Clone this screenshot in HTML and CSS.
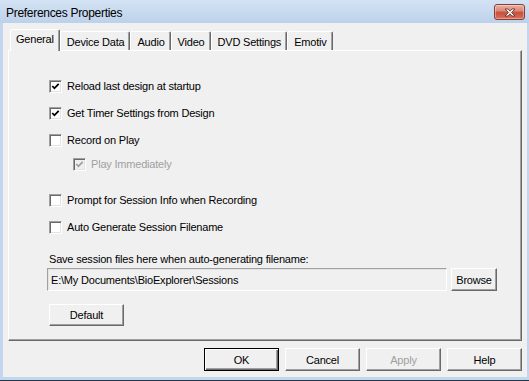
FILE: index.html
```html
<!DOCTYPE html>
<html lang="en">
<head>
    <meta charset="UTF-8">
    <meta name="viewport" content="width=device-width, initial-scale=1.0">
    <title>Preferences Properties</title>
    <link rel="stylesheet" href="styles.css">
</head>
<body>

    <div class="window">
        <div class="titlebar">
            <span class="title">Preferences Properties</span>
            <button class="close" title="Close">
                <svg width="12" height="9" viewBox="0 0 12 9">
                    <path d="M1 1h3l2 2.2 2-2.2h3l-3.5 3.5 3.5 3.5h-3l-2-2.2-2 2.2h-3l3.5-3.5z" fill="#fff" stroke="#5b2a22" stroke-width="0.8"/>
                </svg>
            </button>
        </div>

        <div class="client">
            <div class="tabs">
                <div class="tab active">General</div>
                <div class="tab">Device Data</div>
                <div class="tab">Audio</div>
                <div class="tab">Video</div>
                <div class="tab">DVD Settings</div>
                <div class="tab">Emotiv</div>
            </div>

            <div class="panel">
                <label class="check first">
                    <span class="box"><svg width="9" height="9" viewBox="0 0 9 9"><polyline points="1.3,4 3.4,6.3 7.7,1.8" /></svg></span>
                    Reload last design at startup
                </label>
                <label class="check">
                    <span class="box"><svg width="9" height="9" viewBox="0 0 9 9"><polyline points="1.3,4 3.4,6.3 7.7,1.8" /></svg></span>
                    Get Timer Settings from Design
                </label>
                <label class="check">
                    <span class="box"></span>
                    Record on Play
                </label>
                <label class="check sub disabled">
                    <span class="box"><svg width="9" height="9" viewBox="0 0 9 9"><polyline points="1.3,4 3.4,6.3 7.7,1.8" /></svg></span>
                    Play Immediately
                </label>

                <label class="check group">
                    <span class="box"></span>
                    Prompt for Session Info when Recording
                </label>
                <label class="check">
                    <span class="box"></span>
                    Auto Generate Session Filename
                </label>

                <div class="save-label">Save session files here when auto-generating filename:</div>
                <div class="path-row">
                    <input class="path" type="text" value="E:\My Documents\BioExplorer\Sessions" readonly>
                    <button class="btn browse">Browse</button>
                </div>

                <button class="btn default-btn">Default</button>
            </div>

            <div class="actions">
                <button class="btn ok">OK</button>
                <button class="btn">Cancel</button>
                <button class="btn" disabled>Apply</button>
                <button class="btn">Help</button>
            </div>
        </div>
    </div>

</body>
</html>
```

FILE: styles.css
```css
body {
    margin: 0;
    padding: 0;
    font-family: "Liberation Sans", Arial, sans-serif;
    font-size: 11px;
    letter-spacing: -0.2px;
    color: #000;
}

.window {
    width: 529px;
    height: 381px;
    box-sizing: border-box;
    display: flex;
    flex-direction: column;
    background-color: #c2d6ed;
    padding-bottom: 3px;
    border-bottom: 1px solid #26364a;
}

.titlebar {
    height: 23px;
    flex-shrink: 0;
    display: flex;
    align-items: center;
    justify-content: space-between;
    padding: 0 4px 0 6px;
    background: linear-gradient(#d4e3f4, #bcd1ea);
}

.title {
    font-size: 12px;
    letter-spacing: -0.3px;
    padding-top: 2px;
}

.close {
    width: 31px;
    height: 16px;
    margin-top: 1px;
    padding: 0;
    display: flex;
    align-items: center;
    justify-content: center;
    border: 1px solid #8b3b30;
    border-radius: 3px;
    background: linear-gradient(#eab0a3, #da8b79 40%, #c84f3b 55%, #d6735f);
    box-shadow: inset 0 0 0 1px rgba(255, 255, 255, 0.35);
}

.client {
    flex: 1;
    display: flex;
    flex-direction: column;
    margin: 0 2px 0 3px;
    padding: 6px 5px;
    background-color: #f0f0f0;
}

.tabs {
    height: 21px;
    flex-shrink: 0;
    display: flex;
    align-items: flex-end;
    padding-left: 2px;
}

.tab {
    height: 19px;
    box-sizing: border-box;
    padding: 2px 5px 0 6px;
    line-height: 16px;
    background-color: #f0f0f0;
    border-top: 1px solid #fff;
    border-left: 1px solid #fff;
    border-right: 1px solid #696969;
    border-radius: 2px 2px 0 0;
    box-shadow: inset -1px 0 #a0a0a0;
}

.tab.active {
    position: relative;
    z-index: 1;
    height: 22px;
    margin-bottom: -1px;
    padding: 1px 5px 0 5px;
}

.panel {
    flex: 1;
    display: flex;
    flex-direction: column;
    align-items: flex-start;
    padding: 27px 0 0 40px;
    border: 1px solid;
    border-color: #fff #696969 #696969 #fff;
    box-shadow: inset -1px -1px #a0a0a0;
}

.check {
    height: 16px;
    display: flex;
    align-items: center;
    gap: 5px;
    margin-top: 11px;
}

.check.first {
    margin-top: 0;
}

.check.sub {
    margin-top: 8px;
    margin-left: 24px;
}

.check.group {
    margin-top: 20px;
}

.box {
    width: 13px;
    height: 13px;
    box-sizing: border-box;
    display: flex;
    align-items: center;
    justify-content: center;
    background-color: #fff;
    border: 1px solid;
    border-color: #a0a0a0 #fff #fff #a0a0a0;
    box-shadow: inset 1px 1px #696969, inset -1px -1px #e3e3e3;
}

.box polyline {
    fill: none;
    stroke: #000;
    stroke-width: 1.8;
}

.check.disabled {
    color: #a0a0a0;
}

.check.disabled .box {
    background-color: #f0f0f0;
}

.check.disabled .box polyline {
    stroke: #a0a0a0;
}

.save-label {
    height: 14px;
    line-height: 14px;
    margin-top: 17px;
}

.path-row {
    display: flex;
    gap: 4px;
    margin-top: 2px;
    margin-left: -2px;
}

.path {
    width: 400px;
    height: 23px;
    box-sizing: border-box;
    margin: 0;
    padding: 0 3px;
    font: inherit;
    letter-spacing: inherit;
    color: #000;
    background-color: #f0f0f0;
    border: 1px solid;
    border-color: #a0a0a0 #fff #fff #a0a0a0;
    box-shadow: inset 1px 1px #e3e3e3;
    outline: none;
}

.btn {
    width: 75px;
    height: 23px;
    box-sizing: border-box;
    padding: 0;
    font: inherit;
    letter-spacing: inherit;
    color: #000;
    background-color: #f0f0f0;
    border: 1px solid;
    border-color: #fff #696969 #696969 #fff;
    box-shadow: inset -1px -1px #a0a0a0;
}

.btn:disabled {
    color: #a0a0a0;
}

.browse {
    width: 46px;
}

.default-btn {
    height: 22px;
    margin-top: 13px;
}

.ok {
    border-color: #000;
    box-shadow: inset 1px 1px #fff, inset -1px -1px #696969, inset -2px -2px #a0a0a0;
}

.actions {
    height: 23px;
    flex-shrink: 0;
    display: flex;
    justify-content: flex-end;
    gap: 6px;
    margin-top: 7px;
}
```
